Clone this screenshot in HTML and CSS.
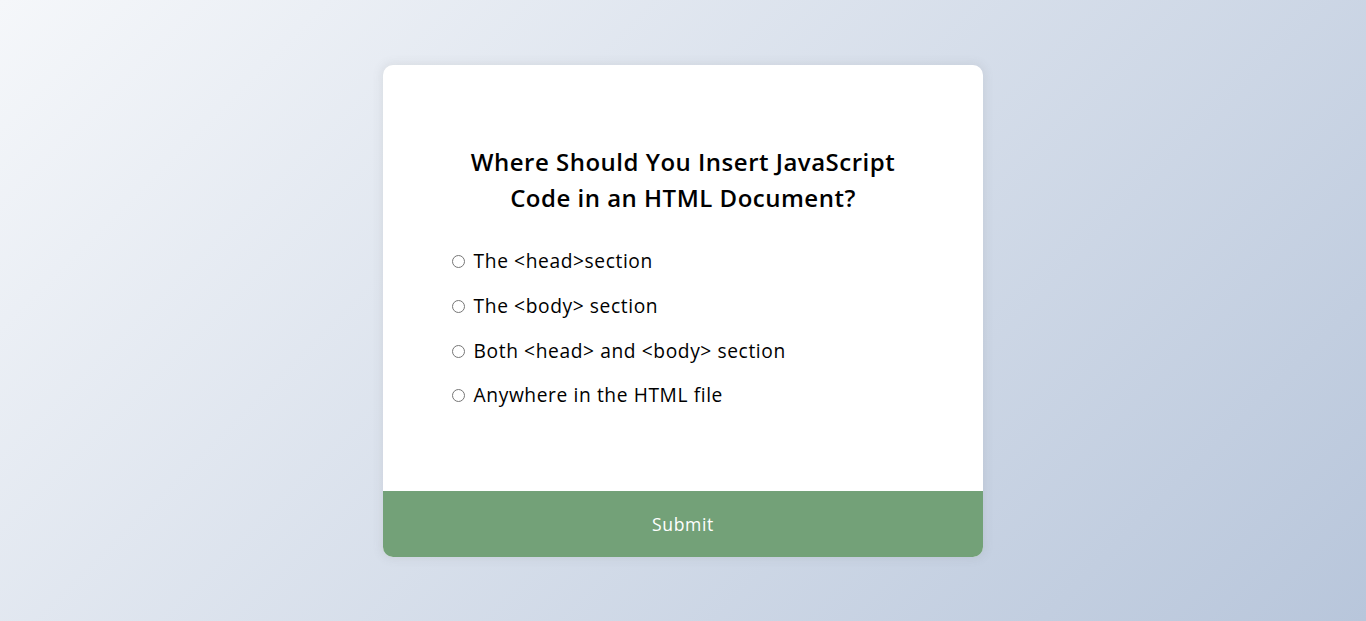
FILE: index.html
```html
<!DOCTYPE html>
<html lang="en">
<head>
<meta charset="UTF-8">
<title>Quiz App</title>
<link rel="stylesheet" href="styles.css">
</head>
<body>
<div class="quiz-container">
  <div class="quiz-header">
    <h2 class="question">Where Should You Insert JavaScript Code in an HTML Document?</h2>
    <ul class="answers">
      <li><input type="radio" name="answer" id="a" class="answer"> <label for="a">The &lt;head&gt;section</label></li>
      <li><input type="radio" name="answer" id="b" class="answer"> <label for="b">The &lt;body&gt; section</label></li>
      <li><input type="radio" name="answer" id="c" class="answer"> <label for="c">Both &lt;head&gt; and &lt;body&gt; section</label></li>
      <li><input type="radio" name="answer" id="d" class="answer"> <label for="d">Anywhere in the HTML file</label></li>
    </ul>
  </div>
  <button class="submit">Submit</button>
</div>
</body>
</html>
```
FILE: styles.css
```css
* { box-sizing: border-box; }
html, body { height: 100%; }
body {
  margin: 0;
  font-family: "Open Sans", "Liberation Sans", sans-serif;
  background: linear-gradient(135deg, #f5f7fa 0%, #b8c6db 100%);
  display: flex;
  align-items: center;
  justify-content: center;
}
.quiz-container {
  background: #fff;
  width: 600px;
  border-radius: 10px;
  box-shadow: 0 0 10px 2px rgba(100, 100, 100, 0.1);
  overflow: hidden;
  margin-top: 1px;
}
.quiz-header { padding: 64px; }
.question {
  margin: 0;
  padding: 15px 16px 17px;
  text-align: center;
  font-size: 24px;
  line-height: 36px;
  font-weight: 600;
  letter-spacing: 0.5px;
  color: #000;
}
.answers {
  list-style: none;
  padding: 0;
  margin: 14px 0 16.8px;
}
.answers li {
  font-size: 19.2px;
  line-height: 28.8px;
  margin: 16px 0;
  letter-spacing: 0.6px;
  color: #000;
}
.answers li:first-child { margin-top: 0; }
.answers li:last-child { margin-bottom: 0; }
.answers input { margin: 3px 3px 0 5px; }
.submit {
  display: block;
  width: 100%;
  border: none;
  background: #73a178;
  color: #fff;
  font-family: inherit;
  font-size: 17.6px;
  line-height: 24.4px;
  letter-spacing: 0.6px;
  padding: 20.8px;
  cursor: pointer;
}
```
